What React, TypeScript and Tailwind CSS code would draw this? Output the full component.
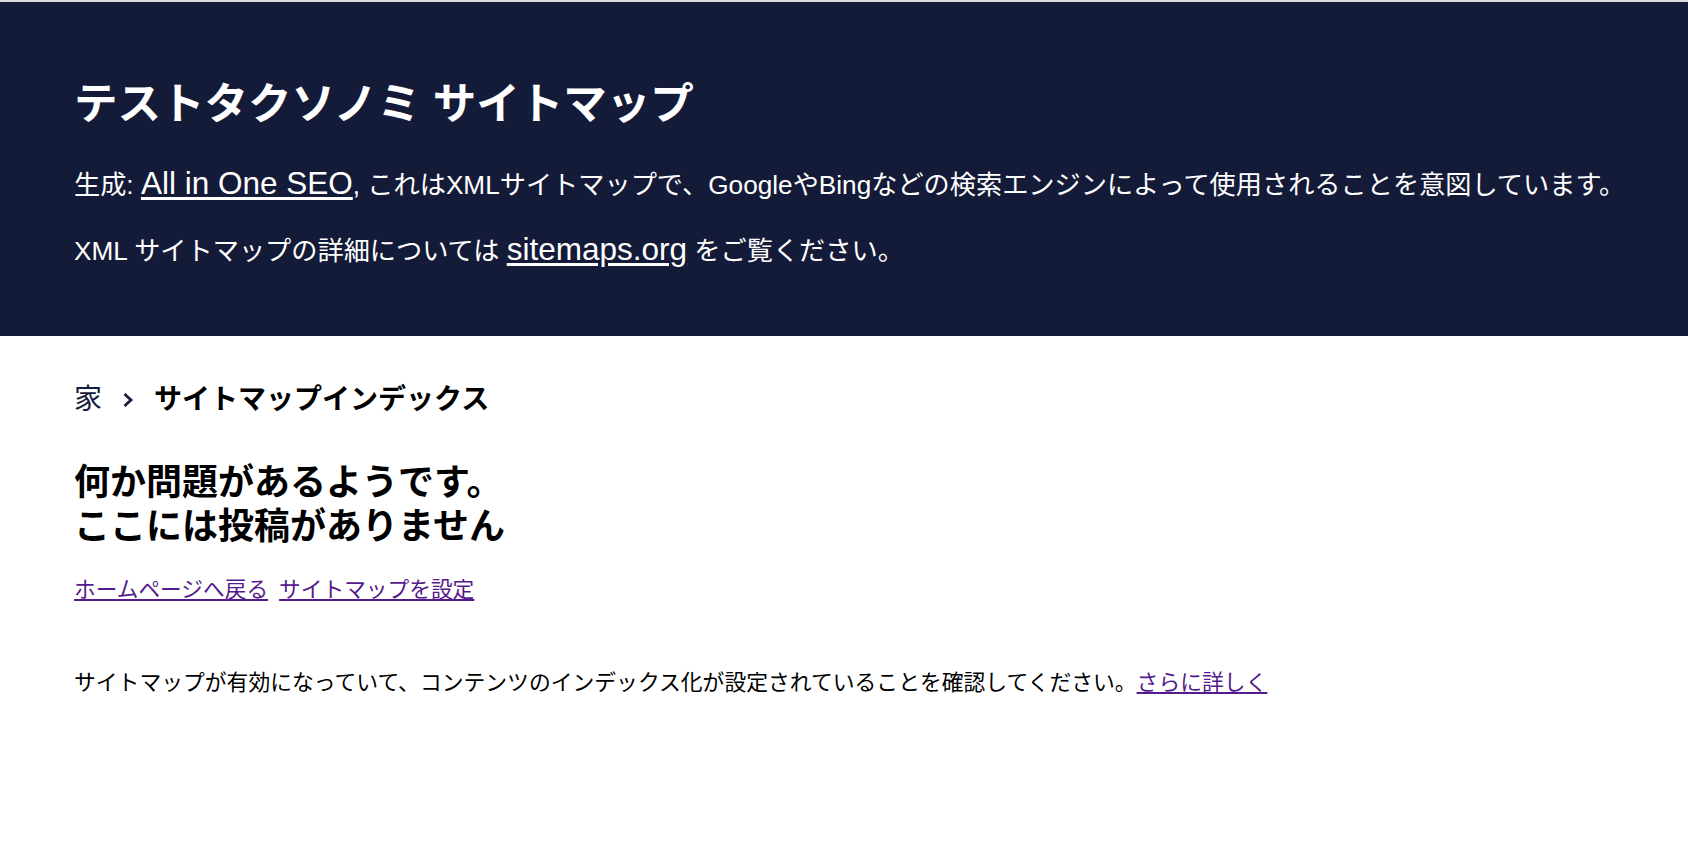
export default function App() {
  return (
    <div className="min-h-[846px] bg-white font-['Liberation_Sans','Noto_Sans_CJK_JP',sans-serif] text-black">
      <div className="h-[2px] bg-[#d9d9d9]" />
      <header className="bg-[#141b38] pl-[74px] pt-[76px] pb-[65px] text-white">
        <h1 className="text-[43.5px] font-bold leading-[52px]">テストタクソノミ サイトマップ</h1>
        <p className="mt-[35px] h-[40px] text-[26.2px] leading-[40px]">
          生成: <a href="#" className="text-[31.5px] leading-[20px] underline underline-offset-[3px]">All in One SEO</a>, これはXMLサイトマップで、GoogleやBingなどの検索エンジンによって使用されることを意図しています。
        </p>
        <p className="mt-[26px] h-[40px] text-[26.2px] leading-[40px]">
          XML サイトマップの詳細については <a href="#" className="text-[31.5px] leading-[20px] underline underline-offset-[3px]">sitemaps.org</a> をご覧ください。
        </p>
      </header>
      <main className="pl-[74px]">
        <nav className="mt-[46px] flex h-[36px] items-center text-[28px] leading-[36px]">
          <span className="text-[#141b38]">家</span>
          <svg className="ml-[20px] mr-[20px]" width="12" height="16" viewBox="0 0 12 16" fill="none">
            <polyline points="2.5,2 9,8 2.5,14" stroke="#141b38" strokeWidth="2.8" strokeLinejoin="miter" />
          </svg>
          <span className="font-bold text-black">サイトマップインデックス</span>
        </nav>
        <h2 className="mt-[43px] text-[36px] font-bold leading-[43.5px]">
          何か問題があるようです。
          <br />
          ここには投稿がありません
        </h2>
        <div className="mt-[27px] flex gap-[11px] text-[21.7px] leading-[30px]">
          <a href="#" className="text-[#551a8b] underline underline-offset-[2px]">ホームページへ戻る</a>
          <a href="#" className="text-[#551a8b] underline underline-offset-[2px]">サイトマップを設定</a>
        </div>
        <p className="mt-[63px] text-[21.8px] leading-[30px]">
          サイトマップが有効になっていて、コンテンツのインデックス化が設定されていることを確認してください。
          <a href="#" className="text-[#551a8b] underline underline-offset-[2px]">さらに詳しく</a>
        </p>
      </main>
    </div>
  );
}
